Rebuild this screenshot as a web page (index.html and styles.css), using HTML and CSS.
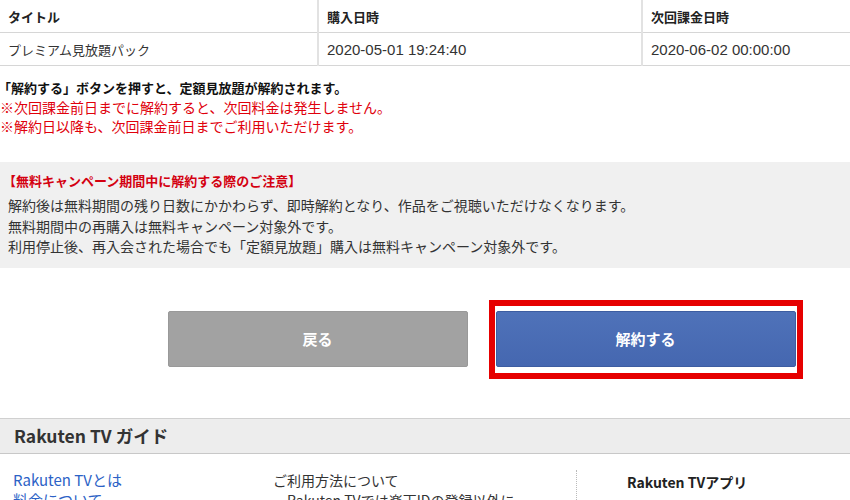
FILE: index.html
```html
<!DOCTYPE html>
<html lang="ja">
<head>
<meta charset="utf-8">
<title>解約確認</title>
<link rel="stylesheet" href="styles.css">
</head>
<body>
<div class="page">
  <table class="plan-table">
    <tr class="head">
      <th class="col1">タイトル</th>
      <th class="col2">購入日時</th>
      <th class="col3">次回課金日時</th>
    </tr>
    <tr>
      <td>プレミアム見放題パック</td>
      <td class="date">2020-05-01 19:24:40</td>
      <td class="date">2020-06-02 00:00:00</td>
    </tr>
  </table>

  <div class="notes">
    <p class="note-main">「解約する」ボタンを押すと、定額見放題が解約されます。</p>
    <p class="note-red">※次回課金前日までに解約すると、次回料金は発生しません。</p>
    <p class="note-red">※解約日以降も、次回課金前日までご利用いただけます。</p>
  </div>

  <div class="caution">
    <p class="caution-title">【無料キャンペーン期間中に解約する際のご注意】</p>
    <p>解約後は無料期間の残り日数にかかわらず、即時解約となり、作品をご視聴いただけなくなります。</p>
    <p>無料期間中の再購入は無料キャンペーン対象外です。</p>
    <p>利用停止後、再入会された場合でも「定額見放題」購入は無料キャンペーン対象外です。</p>
  </div>

  <div class="actions">
    <button class="btn btn-back">戻る</button>
    <div class="highlight">
      <button class="btn btn-cancel">解約する</button>
    </div>
  </div>

  <div class="guide">
    <h2 class="guide-head">Rakuten TV ガイド</h2>
    <div class="guide-body">
      <ul class="guide-links">
        <li><a href="#">Rakuten TVとは</a></li>
        <li><a href="#">料金について</a></li>
      </ul>
      <div class="guide-usage">
        <p class="usage-title">ご利用方法について</p>
        <p class="usage-text">Rakuten TVでは楽天IDの登録以外に</p>
      </div>
      <div class="guide-app">
        <p class="app-title">Rakuten TVアプリ</p>
      </div>
    </div>
  </div>
</div>
</body>
</html>
```

FILE: styles.css
```css
html, body {
  margin: 0;
  padding: 0;
  overflow: hidden;
  background: #fff;
}
body {
  font-family: "Noto Sans CJK JP", "Liberation Sans", sans-serif;
  color: #333;
}
p { margin: 0; }
.page {
  width: 963px;
}
.plan-table {
  width: 963px;
  border-collapse: collapse;
  table-layout: fixed;
}
.plan-table th,
.plan-table td {
  text-align: left;
  padding: 0 8px;
  border-bottom: 1px solid #d6d6d6;
  border-left: 2px solid #e2e2e2;
  font-size: 13px;
}
.plan-table th:first-child,
.plan-table td:first-child {
  border-left: none;
}
.plan-table th {
  height: 32px;
  font-weight: bold;
  color: #222;
}
.plan-table td {
  height: 32px;
  color: #333;
}
.plan-table .col1 { width: 301px; }
.plan-table .col2 { width: 306px; }
.plan-table td.date {
  font-family: "Liberation Sans", "Noto Sans CJK JP", sans-serif;
  font-size: 15px;
}
.notes {
  padding: 12px 0 0;
  font-size: 14px;
  line-height: 19.5px;
}
.note-main {
  font-weight: bold;
  font-size: 13px;
  color: #111;
  margin-left: -2px;
}
.note-red {
  color: #e0000b;
}
.caution {
  margin-top: 25px;
  background: #f0f0f0;
  padding: 9px 8px 11px;
  font-size: 14px;
  line-height: 20.5px;
  color: #333;
}
.caution-title {
  color: #d40010;
  font-size: 13px;
  font-weight: bold;
  margin-left: -5px;
  margin-bottom: 4px;
}
.actions {
  display: flex;
  justify-content: center;
  gap: 28px;
  padding-top: 43px;
}
.btn {
  width: 300px;
  height: 56px;
  border-radius: 2px;
  font-family: "Noto Sans CJK JP", sans-serif;
  font-size: 15px;
  font-weight: bold;
  color: #fff;
  display: block;
}
.btn-back {
  background: #a2a2a2;
  border: 1px solid #999;
}
.highlight {
  border: 6px solid #e60000;
  padding: 5px 1px 6px;
  margin: -11px -7px -12px;
}
.btn-cancel {
  background: linear-gradient(#4f72b9, #4567b0);
  border: 1px solid #3d5da1;
}
.guide {
  margin-top: 51px;
}
.guide-head {
  margin: 0;
  height: 34px;
  line-height: 34px;
  background: #ededed;
  border-top: 1px solid #d0d0d0;
  border-bottom: 1px solid #c8c8c8;
  padding: 0 14px;
  font-size: 17.5px;
  font-weight: bold;
  color: #333;
}
.guide-body {
  display: flex;
  padding-top: 16px;
}
.guide-links {
  list-style: none;
  margin: 0;
  padding: 0 0 0 13px;
  width: 260px;
  font-size: 15px;
  line-height: 20px;
}
.guide-links a {
  color: #2c62c6;
  text-decoration: none;
}
.guide-usage {
  width: 303px;
  font-size: 14px;
  line-height: 20px;
  color: #333;
}
.usage-text {
  padding-left: 14px;
}
.guide-app {
  border-left: 1px dotted #bbb;
  padding: 2px 0 0 50px;
  height: 60px;
}
.app-title {
  font-size: 14px;
  font-weight: bold;
  color: #222;
}
```
